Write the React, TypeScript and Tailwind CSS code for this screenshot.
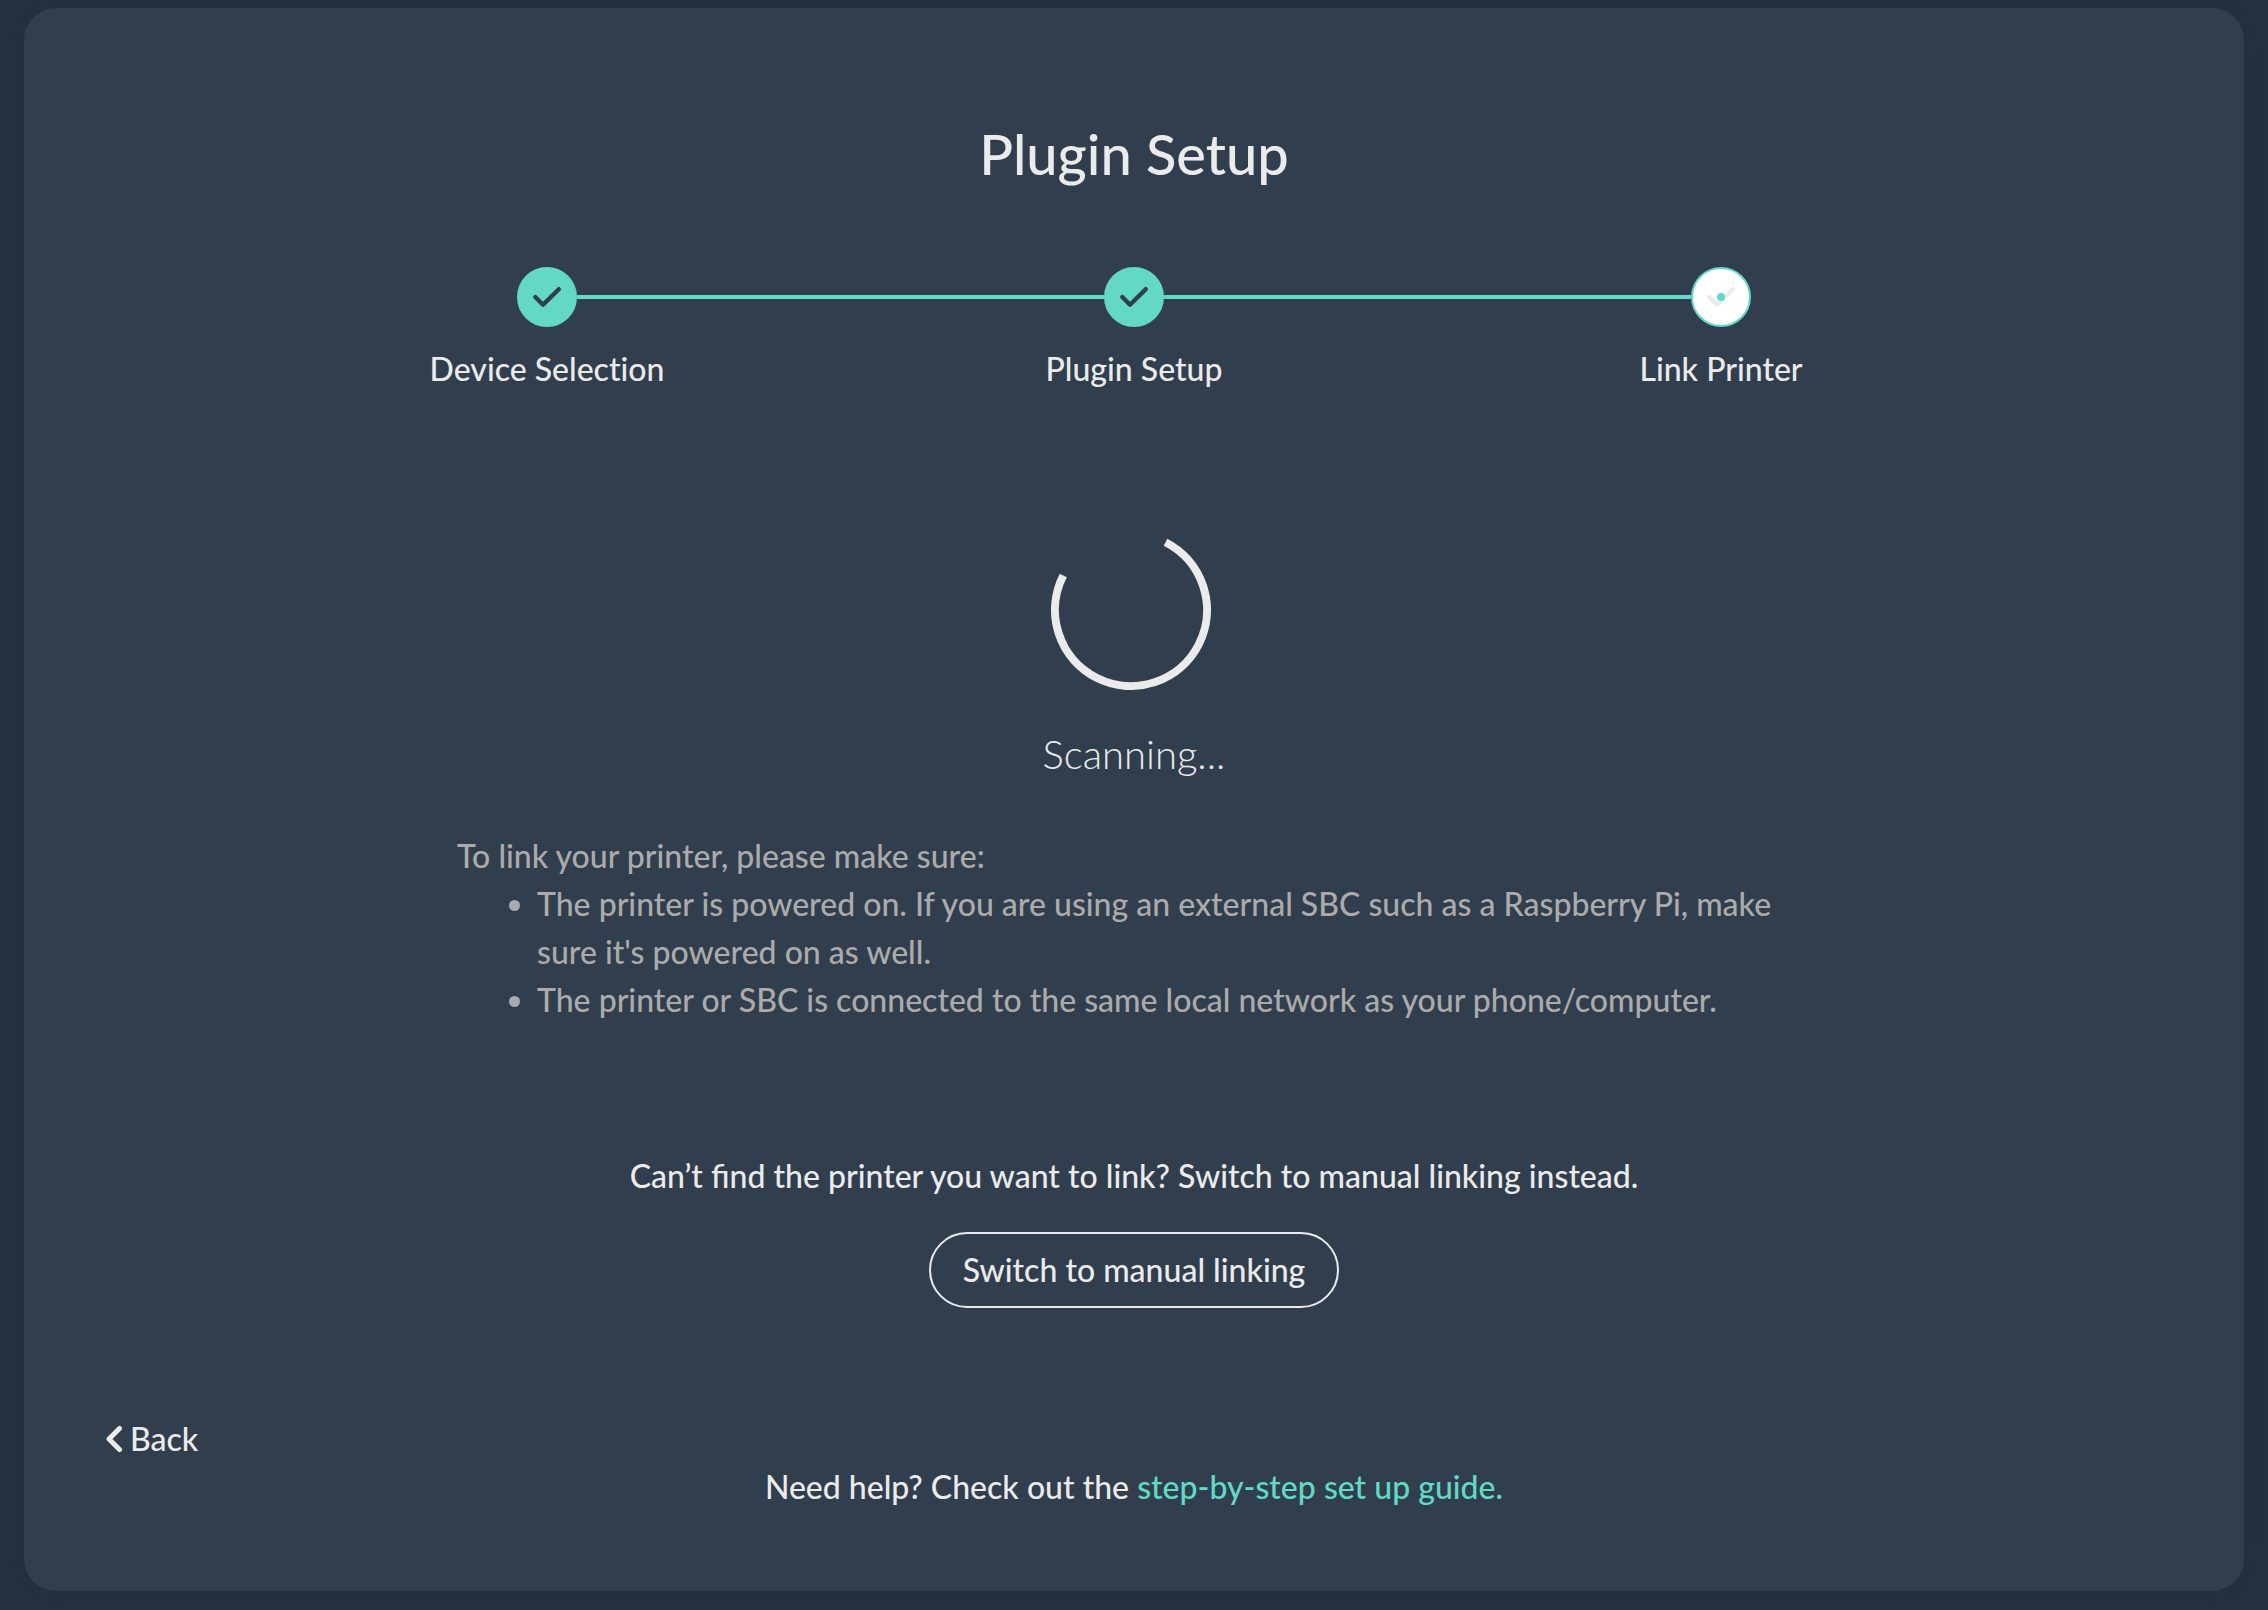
type StepState = "done" | "current";

const steps: { label: string; state: StepState }[] = [
  { label: "Device Selection", state: "done" },
  { label: "Plugin Setup", state: "done" },
  { label: "Link Printer", state: "current" },
];

function StepIcon({ state }: { state: StepState }) {
  const done = state === "done";
  return (
    <svg viewBox="0 0 60 60" className="size-[60px] shrink-0" aria-hidden="true">
      <circle
        cx="30"
        cy="30"
        r="29"
        fill={done ? "#63d8c5" : "#ffffff"}
        stroke="#63d8c5"
        strokeWidth="2"
      />
      <path
        d="M18.3 30 26 37.7 41.8 22.2"
        fill="none"
        stroke={done ? "#313e4e" : "#ebebeb"}
        strokeWidth="4.4"
        strokeLinecap="round"
        strokeLinejoin="round"
      />
      {!done && <circle cx="30" cy="30" r="4" fill="#63d8c5" />}
    </svg>
  );
}

function Stepper() {
  return (
    <ol className="mt-20 grid w-full max-w-[1761px] grid-cols-3 [font-variant-ligatures:none]">
      {steps.map((step, i) => (
        <li
          key={step.label}
          aria-current={step.state === "current" ? "step" : undefined}
          className="flex flex-col items-center gap-[18px]"
        >
          <div className="flex w-full items-center">
            <span className={i > 0 ? "h-1 flex-1 bg-[#63d8c5]" : "h-1 flex-1"} />
            <StepIcon state={step.state} />
            <span className={i < steps.length - 1 ? "h-1 flex-1 bg-[#63d8c5]" : "h-1 flex-1"} />
          </div>
          <span>{step.label}</span>
        </li>
      ))}
    </ol>
  );
}

function Spinner() {
  return (
    <svg viewBox="0 0 166 160" className="mt-[137px] h-[160px] w-[166px]" aria-hidden="true">
      <circle
        cx="80"
        cy="80"
        r="76"
        fill="none"
        stroke="#ebebeb"
        strokeWidth="8"
        pathLength="360"
        strokeDasharray="270 90"
        transform="rotate(-63 80 80)"
      />
    </svg>
  );
}

export default function App() {
  return (
    <div className="min-h-screen bg-[#263240] px-6 pt-2 pb-[18px] font-['Lato',sans-serif] text-[32px] leading-[48px] font-medium text-[#ebebeb]">
      <main className="flex flex-col items-center rounded-[32px] bg-[#313e4e] px-20 pt-28 pb-20 shadow-[0_0_24px_rgba(30,36,50,0.35)]">
        <h1 className="text-[56px] leading-[67px] font-medium">Plugin Setup</h1>
        <Stepper />
        <Spinner />
        <p role="status" className="mt-[34px] text-[40px] leading-[60px] font-light">
          Scanning...
        </p>
        <section className="mt-12 w-full max-w-[1354px] text-[#ababab]">
          <p>To link your printer, please make sure:</p>
          <ul className="list-disc pl-20">
            <li>
              The printer is powered on. If you are using an external SBC such as a Raspberry Pi,
              make sure it's powered on as well.
            </li>
            <li>
              The printer or SBC is connected to the same local network as your phone/computer.
            </li>
          </ul>
        </section>
        <p className="mt-32">
          Can’t find the printer you want to link? Switch to manual linking instead.
        </p>
        <button
          type="button"
          className="mt-8 rounded-full border-2 border-[#ebebeb] px-8 py-3"
        >
          Switch to manual linking
        </button>
        <button type="button" className="mt-[107px] flex items-center gap-1.5 self-start">
          <svg viewBox="0 0 20 28" className="h-7 w-5" aria-hidden="true">
            <path
              d="M15.5 3.5 5 14 15.5 24.5"
              fill="none"
              stroke="#ebebeb"
              strokeWidth="5"
              strokeLinecap="round"
              strokeLinejoin="round"
            />
          </svg>
          Back
        </button>
        <p>
          Need help? Check out the{" "}
          <a href="#guide" className="text-[#63d8c5]">
            step-by-step set up guide.
          </a>
        </p>
      </main>
    </div>
  );
}
